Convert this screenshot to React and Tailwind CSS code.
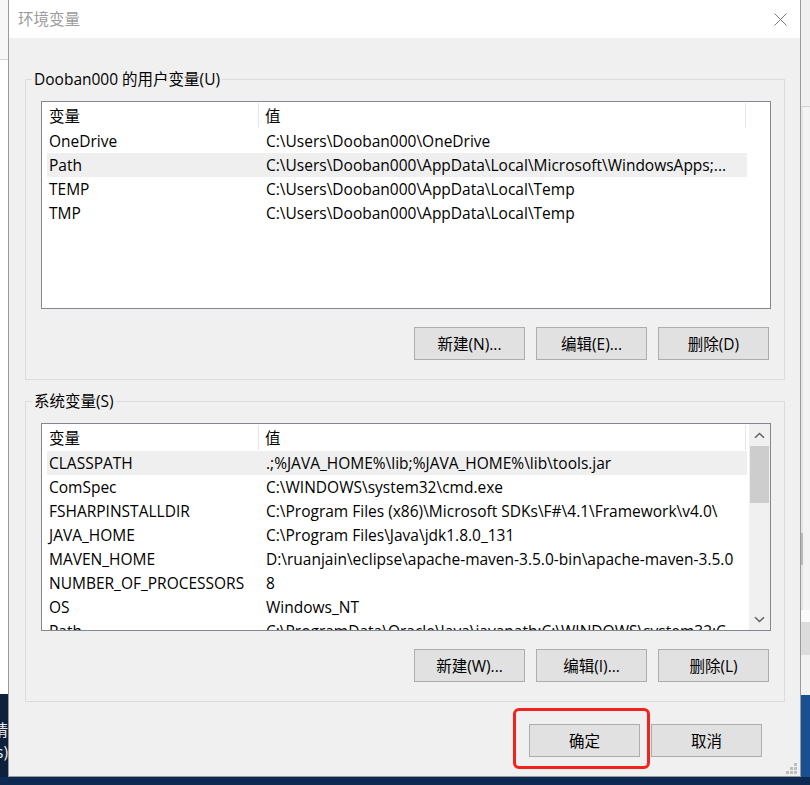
import React from "react";

const userRows = [
  ["OneDrive", "C:\\Users\\Dooban000\\OneDrive", false],
  ["Path", "C:\\Users\\Dooban000\\AppData\\Local\\Microsoft\\WindowsApps;...", true],
  ["TEMP", "C:\\Users\\Dooban000\\AppData\\Local\\Temp", false],
  ["TMP", "C:\\Users\\Dooban000\\AppData\\Local\\Temp", false],
];

const sysRows = [
  ["CLASSPATH", ".;%JAVA_HOME%\\lib;%JAVA_HOME%\\lib\\tools.jar", true],
  ["ComSpec", "C:\\WINDOWS\\system32\\cmd.exe", false],
  ["FSHARPINSTALLDIR", "C:\\Program Files (x86)\\Microsoft SDKs\\F#\\4.1\\Framework\\v4.0\\", false],
  ["JAVA_HOME", "C:\\Program Files\\Java\\jdk1.8.0_131", false],
  ["MAVEN_HOME", "D:\\ruanjain\\eclipse\\apache-maven-3.5.0-bin\\apache-maven-3.5.0", false],
  ["NUMBER_OF_PROCESSORS", "8", false],
  ["OS", "Windows_NT", false],
  ["Path", "C:\\ProgramData\\Oracle\\Java\\javapath;C:\\WINDOWS\\system32;C...", false],
];

function Header() {
  return (
    <div className="flex h-[27px] shrink-0 ml-[5px] w-[700px]">
      <div className="w-[212px] pl-[2px] flex items-center border-r border-[#e5e5e5] my-[1px]">变量</div>
      <div className="w-[487px] pl-[6px] flex items-center border-r border-[#e5e5e5] my-[1px]">值</div>
    </div>
  );
}

function Row({ name, value, sel }) {
  return (
    <div
      className={
        sel
          ? "flex h-[24px] shrink-0 ml-[5px] w-[700px] items-center bg-[#efefef]"
          : "flex h-[24px] shrink-0 ml-[5px] w-[700px] items-center"
      }
    >
      <div className="w-[213px] pl-[2px] whitespace-nowrap overflow-hidden">{name}</div>
      <div className="flex-1 pl-[6px] whitespace-nowrap overflow-hidden">{value}</div>
    </div>
  );
}

function Chevron({ down }) {
  return (
    <svg width="11" height="7" viewBox="0 0 11 7" className="block">
      {down ? (
        <path d="M1 1.2 L5.5 5.5 L10 1.2" fill="none" stroke="#606060" strokeWidth="1.5" />
      ) : (
        <path d="M1 5.8 L5.5 1.5 L10 5.8" fill="none" stroke="#606060" strokeWidth="1.5" />
      )}
    </svg>
  );
}

function Scrollbar() {
  return (
    <div className="w-[21px] shrink-0 bg-[#f0f0f0] flex flex-col">
      <div className="h-[22px] flex items-center justify-center">
        <Chevron />
      </div>
      <div className="h-[57px] mx-[1px] bg-[#cdcdcd]" />
      <div className="flex-1" />
      <div className="h-[22px] flex items-center justify-center">
        <Chevron down />
      </div>
    </div>
  );
}

function VarList({ rows, scroll }) {
  return (
    <div className="w-[730px] h-[208px] border border-[#828790] bg-white flex overflow-hidden">
      <div className="flex-1 flex flex-col overflow-hidden">
        <Header />
        {rows.map((r, i) => (
          <Row key={i} name={r[0]} value={r[1]} sel={r[2]} />
        ))}
      </div>
      {scroll && <Scrollbar />}
    </div>
  );
}

function Btn({ children }) {
  return (
    <div className="w-[111px] h-[33px] bg-[#e1e1e1] border border-[#adadad] flex items-center justify-center text-black">
      {children}
    </div>
  );
}

function Group({ label, rows, scroll, buttons }) {
  return (
    <div className="relative h-[301px] border border-[#dcdcdc] pl-[15px] pt-[21px] flex flex-col shrink-0">
      <div className="absolute left-[6px] -top-[11px] px-[2px] bg-[#f0f0f0] leading-[20px] whitespace-nowrap">
        {label}
      </div>
      <VarList rows={rows} scroll={scroll} />
      <div className="mt-[18px] flex justify-end gap-[11px] pr-[15px]">
        {buttons.map((b) => (
          <Btn key={b}>{b}</Btn>
        ))}
      </div>
    </div>
  );
}

function Gripper() {
  const dots = [
    [10, 0],
    [10, 4],
    [6, 4],
    [10, 8],
    [6, 8],
    [2, 8],
  ];
  return (
    <svg width="13" height="11" viewBox="0 0 13 11" className="block">
      {dots.map(([x, y], i) => (
        <rect key={i} x={x} y={y} width="3" height="3" fill="#bdbdbd" />
      ))}
    </svg>
  );
}

export default function App() {
  return (
    <div className="w-[810px] h-[785px] overflow-hidden flex flex-col bg-[#0f2a52] text-[15.5px] leading-[20px] text-black font-['Open_Sans','Noto_Sans_CJK_SC',sans-serif]">
      <div className="flex h-[777px] shrink-0">
        {/* left strip: window behind */}
        <div className="w-[8px] shrink-0 flex flex-col">
          <div className="h-[60px] bg-[#f7f7f7] border-b border-[#d6d6d6]" />
          <div className="h-[634px] bg-white" />
          <div className="flex-1 bg-[#0d213f] flex flex-col items-end overflow-hidden pt-[25px] text-[#e8e8e8]">
            <div className="whitespace-nowrap leading-[22px]">请</div>
            <div className="whitespace-nowrap leading-[22px]">s)</div>
          </div>
        </div>

        {/* dialog */}
        <div className="w-[793px] shrink-0 flex flex-col border-l border-r border-b border-[#9a9a9a] bg-[#f0f0f0]">
          <div className="h-[38px] shrink-0 bg-white flex items-center justify-between pl-[9px] pr-[13px]">
            <span className="text-[#9c9c9c]">环境变量</span>
            <svg width="13" height="13" viewBox="0 0 13 13" className="block">
              <path d="M0.5 0.5 L12.5 12.5 M12.5 0.5 L0.5 12.5" stroke="#7a7a7a" strokeWidth="1" />
            </svg>
          </div>
          <div className="flex-1 relative flex flex-col pl-[16px] pr-[15px] pt-[41px]">
            <Group
              label="Dooban000 的用户变量(U)"
              rows={userRows}
              buttons={["新建(N)...", "编辑(E)...", "删除(D)"]}
            />
            <div className="mt-[21px]">
              <Group
                label="系统变量(S)"
                rows={sysRows}
                scroll
                buttons={["新建(W)...", "编辑(I)...", "删除(L)"]}
              />
            </div>
            <div className="mt-[22px] flex justify-end gap-[11px] pr-[23px]">
              <div className="relative">
                <Btn>确定</Btn>
                <div className="absolute -left-[16px] -top-[16px] w-[137px] h-[61px] border-[3px] border-[#f3221c] rounded-[6px]" />
              </div>
              <Btn>取消</Btn>
            </div>
            <div className="absolute right-[3px] bottom-[2px]">
              <Gripper />
            </div>
          </div>
        </div>

        {/* right strip: window behind */}
        <div className="w-[9px] shrink-0 flex flex-col">
          <div className="h-[107px] bg-[#f0f0f0] border-b border-[#d4d4d4]" />
          <div className="h-[426px] bg-[#f3f3f3] border-l-2 border-[#e6e6e6]" />
          <div className="h-[32px] bg-[#f3f3f3] border-l-2 border-[#b9b9b9]" />
          <div className="h-[45px] bg-[#f3f3f3] border-l-2 border-[#e6e6e6]" />
          <div className="h-[12px] bg-[#fbfbfb]" />
          <div className="h-[33px] bg-[#dcdcdc]" />
          <div className="h-[40px] bg-[#f2f2f2]" />
          <div className="flex-1 bg-[#1b4f93]" />
        </div>
      </div>
      <div className="flex-1 bg-[#0f2a52]" />
    </div>
  );
}
